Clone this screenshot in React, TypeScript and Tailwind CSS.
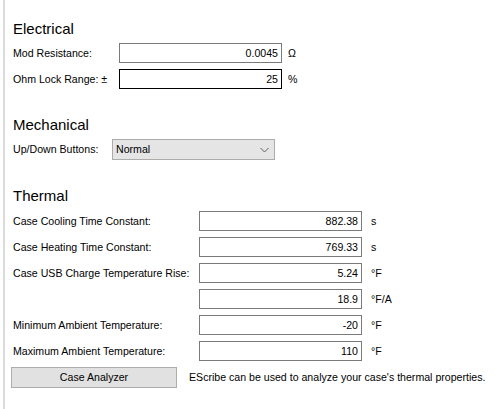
import { ReactNode } from "react"

function Heading({ children, mt }: { children: ReactNode; mt: string }) {
  return <div className={`${mt} h-[18px] text-[15px] leading-[18px] text-black`}>{children}</div>
}

function Field({ value, focused }: { value: string; focused?: boolean }) {
  return (
    <div
      className={
        "w-[163px] h-[20px] shrink-0 border bg-white text-right pr-[3px] text-[10.6px] leading-[18px] text-black " +
        (focused ? "border-black" : "border-[#7a7a7a]")
      }>
      {value}
    </div>
  )
}

function Row({
  label,
  labelWidth,
  value,
  unit,
  unitGap,
  focused
}: {
  label: string
  labelWidth: string
  value: string
  unit: string
  unitGap: string
  focused?: boolean
}) {
  return (
    <div className="flex items-center h-[20px] text-[10.6px] leading-[20px]">
      <div className={`${labelWidth} shrink-0 whitespace-nowrap`}>{label}</div>
      <Field value={value} focused={focused} />
      <div className={`${unitGap} whitespace-nowrap`}>{unit}</div>
    </div>
  )
}

const thermal = [
  { label: "Case Cooling Time Constant:", value: "882.38", unit: "s" },
  { label: "Case Heating Time Constant:", value: "769.33", unit: "s" },
  { label: "Case USB Charge Temperature Rise:", value: "5.24", unit: "°F" },
  { label: "", value: "18.9", unit: "°F/A" },
  { label: "Minimum Ambient Temperature:", value: "-20", unit: "°F" },
  { label: "Maximum Ambient Temperature:", value: "110", unit: "°F" }
]

export default function App() {
  return (
    <div className="w-[495px] h-[409px] bg-white pl-[3px] font-['Liberation_Sans',Arial,sans-serif] text-black overflow-hidden">
      <div className="h-full border-l-2 border-[#dadada] pl-[8px] pt-[20px]">
        {/* Electrical */}
        <Heading mt="">Electrical</Heading>
        <div className="mt-[5px] flex flex-col gap-[6px]">
          <Row label="Mod Resistance:" labelWidth="w-[106px]" value="0.0045" unit="Ω" unitGap="ml-[6px]" />
          <Row
            label="Ohm Lock Range: ±"
            labelWidth="w-[106px]"
            value="25"
            unit="%"
            unitGap="ml-[6px]"
            focused
          />
        </div>

        {/* Mechanical */}
        <Heading mt="mt-[27px]">Mechanical</Heading>
        <div className="mt-[5px] flex items-center h-[21px] text-[10.6px]">
          <div className="w-[99px] shrink-0">Up/Down Buttons:</div>
          <div className="w-[163px] h-[21px] border border-[#acacac] bg-[#e5e5e5] flex items-center justify-between pl-[3px] pr-[5px]">
            <span>Normal</span>
            <svg width="9" height="6" viewBox="0 0 9 6" fill="none">
              <path d="M0.5 1 L4.5 5 L8.5 1" stroke="#606060" strokeWidth="1" />
            </svg>
          </div>
        </div>

        {/* Thermal */}
        <Heading mt="mt-[27px]">Thermal</Heading>
        <div className="mt-[6px] flex flex-col gap-[6px]">
          {thermal.map((r) => (
            <Row
              key={r.value}
              label={r.label}
              labelWidth="w-[186px]"
              value={r.value}
              unit={r.unit}
              unitGap="ml-[9px]"
            />
          ))}
        </div>

        <div className="mt-[6px] flex items-center text-[10.6px]">
          <button
            type="button"
            className="ml-[-2px] w-[166px] h-[21px] border border-[#adadad] bg-[#e1e1e1] text-[10.6px] text-black">
            Case Analyzer
          </button>
          <span className="ml-[12px] whitespace-nowrap">
            EScribe can be used to analyze your case's thermal properties.
          </span>
        </div>
      </div>
    </div>
  )
}
